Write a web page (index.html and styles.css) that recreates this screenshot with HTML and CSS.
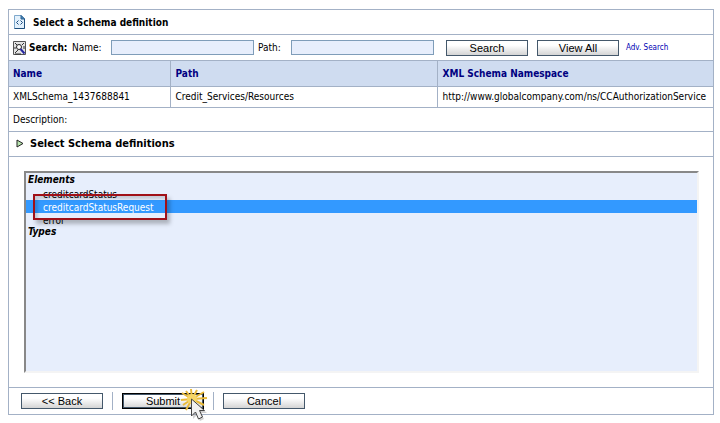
FILE: index.html
```html
<!DOCTYPE html>
<html lang="en">
<head>
    <meta charset="UTF-8">
    <meta name="viewport" content="width=device-width, initial-scale=1.0">
    <title>Select a Schema definition</title>
    <link rel="stylesheet" href="styles.css">
</head>
<body>
    <form class="panel">
        <div class="title-row">
            <svg class="doc-icon" width="11" height="14" viewBox="0 0 11 14">
                <path d="M.5.5h7l3 3v10H.5z" fill="#e3f1fc" stroke="#7fa9cc"/>
                <path d="M10.500 4v9.500H.5" fill="none" stroke="#1f4f7d"/>
                <path d="M7 .5v3.500h3.500z" fill="#4c8fc4" stroke="#2b5f8e"/>
                <path d="M4.500 5.500l-2 2 2 2M6.500 5.500l2 2-2 2" fill="none" stroke="#1c4c80"/>
            </svg>
            <h1>Select a Schema definition</h1>
        </div>

        <div class="search-row">
            <svg class="search-icon" width="13" height="14" viewBox="0 0 13 14">
                <path d="M.5.5h12v13H.5z" fill="#e4e4e4" stroke="#555"/>
                <path d="M2 2l2 2M11 2L9 4M2 12l3-3M2 6v2M11 5v3M2 13h6" stroke="#333"/>
                <circle cx="6" cy="6" r="2.500" fill="#fff" stroke="#222"/>
                <path d="M7.500 8l4 4.500" stroke="#2626a0" stroke-width="2"/>
            </svg>
            <strong>Search:</strong>
            <label for="name">Name:</label>
            <input type="text" id="name">
            <label for="path">Path:</label>
            <input type="text" id="path">
            <button type="button" class="first">Search</button>
            <button type="button">View All</button>
            <a href="#">Adv. Search</a>
        </div>

        <table>
            <thead>
                <tr>
                    <th class="col-name">Name</th>
                    <th class="col-path">Path</th>
                    <th>XML Schema Namespace</th>
                </tr>
            </thead>
            <tbody>
                <tr>
                    <td>XMLSchema_1437688841</td>
                    <td>Credit_Services/Resources</td>
                    <td>http://www.globalcompany.com/ns/CCAuthorizationService</td>
                </tr>
            </tbody>
        </table>

        <div class="description-row">Description:</div>

        <div class="section-row">
            <svg width="8" height="9" viewBox="0 0 8 9">
                <path d="M1 1l6 3.500L1 8z" fill="#b9e6b0" stroke="#222"/>
            </svg>
            <h2><label for="definitions">Select Schema definitions</label></h2>
        </div>

        <div class="list-area">
            <select id="definitions" size="15">
                <optgroup label="Elements">
                    <option>creditcardStatus</option>
                    <option selected>creditcardStatusRequest</option>
                    <option>error</option>
                </optgroup>
                <optgroup label="Types"></optgroup>
            </select>
            <div class="callout"></div>
        </div>

        <div class="button-row">
            <button type="button">&lt;&lt; Back</button>
            <span class="divider"></span>
            <div class="submit-wrap">
                <button type="submit" class="default">Submit</button>
                <svg class="cursor" width="30" height="34" viewBox="0 0 30 34">
                    <path d="M12 11L11 1M12 11l5-9M12 11l12-7M12 11l15-1M12 11l12 6M12 11L6 3M12 11L2 5M12 11L1 12M12 11l-9 6M12 11L6 22M12 11l6 8" fill="none" stroke="#e8b93a" stroke-width="2"/>
                    <circle cx="12" cy="11" r="5" fill="#f6d566"/>
                    <path d="M13 14v17l4-4 3 6 4-2-3-6h6z" fill="#777" opacity=".35"/>
                    <path d="M11.500 11v17l4-4 3 7 4-2-3-6.500h5z" fill="#f1f1f1" stroke="#444"/>
                </svg>
            </div>
            <span class="divider"></span>
            <button type="button">Cancel</button>
        </div>
    </form>
</body>
</html>
```
FILE: styles.css
```css
* {
    box-sizing: border-box;
}
body {
    margin: 0;
    padding: 9px 6px 8px 8px;
    background-color: #fff;
    color: #000;
    font-family: "DejaVu Sans Condensed", "Noto Sans", sans-serif;
    font-size: 10px;
}
.panel {
    border: 1px solid #a3b1c6;
}
.title-row,
.search-row,
.section-row,
.button-row {
    display: flex;
    align-items: center;
}
.title-row,
.search-row,
.description-row,
.section-row {
    border-bottom: 1px solid #a3b1c6;
}
h1,
h2 {
    margin: 0;
    font-size: 10px;
}
.title-row {
    height: 25px;
    padding-left: 5px;
    gap: 8px;
}
.search-row {
    height: 26px;
    padding-left: 4px;
}
.search-row strong {
    width: 43px;
    margin-left: 3px;
}
.search-row label {
    width: 39px;
}
.search-row label + input + label {
    width: 33px;
    margin-left: 4px;
}
input {
    width: 143px;
    height: 15px;
    padding: 0 2px;
    border: 1px solid #7f9db9;
    background-color: #e7eefc;
    font-family: inherit;
    font-size: 10px;
}
button {
    width: 82px;
    height: 16px;
    padding: 0;
    border: 1px solid #44586b;
    background: linear-gradient(#fff 30%, #d4d4d4);
    color: #000;
    font-family: "Liberation Sans", Arial, sans-serif;
    font-size: 11px;
    line-height: 14px;
}
.search-row button {
    margin-left: 9px;
}
.search-row .first {
    margin-left: 12px;
}
.search-row a {
    margin-left: 7px;
    color: #0000b4;
    font-size: 8px;
    text-decoration: none;
}
table {
    width: 100%;
    table-layout: fixed;
    border-collapse: collapse;
}
th,
td {
    padding: 0 0 0 4px;
    border-bottom: 1px solid #a3b1c6;
    text-align: left;
    white-space: nowrap;
}
th + th,
td + td {
    padding-left: 5px;
    border-left: 1px solid #a3b1c6;
}
th {
    height: 25px;
    background-color: #cfdcf0;
    color: #000080;
    font-size: 10px;
}
td {
    height: 21px;
}
.col-name {
    width: 161px;
}
.col-path {
    width: 267px;
}
.description-row {
    padding-left: 4px;
    line-height: 23px;
}
.section-row {
    height: 25px;
    padding-left: 7px;
    gap: 6px;
}
h2 {
    font-size: 11px;
}
.list-area {
    position: relative;
    padding: 14px 14px 14px 15px;
    border-bottom: 1px solid #a3b1c6;
}
select {
    display: block;
    width: 100%;
    height: 202px;
    padding: 1px 0;
    border: 2px solid;
    border-color: #888 #f4f4f4 #f4f4f4 #888;
    border-radius: 0;
    background-color: #e7eefc;
    color: #000;
    font-family: inherit;
    font-size: 10px;
    outline: none;
}
optgroup {
    padding: 0;
    font-size: 10px;
    font-style: italic;
    font-weight: bold;
    line-height: 13px;
}
option {
    min-height: 13px;
    padding: 2px 0 0 17px;
    font-size: 10px;
    font-style: normal;
    font-weight: normal;
    line-height: 11px;
}
option:checked {
    background: #3399ff linear-gradient(#3399ff, #3399ff);
    color: #fff;
}
.callout {
    position: absolute;
    top: 37px;
    left: 24px;
    width: 134px;
    height: 26px;
    border: 2px solid #a01018;
    box-shadow: 3px 4px 4px rgba(0, 0, 0, 0.25), inset 3px 3px 3px rgba(0, 0, 0, 0.15);
}
.button-row {
    height: 26px;
    padding-left: 12px;
    gap: 9px;
}
.divider {
    width: 1px;
    height: 18px;
    background-color: #a3b1c6;
}
.submit-wrap {
    position: relative;
    height: 16px;
}
.default {
    border: 1px solid #000;
    outline: 1px solid #44586b;
    outline-offset: -2px;
}
.cursor {
    position: absolute;
    z-index: 1;
    top: -5px;
    left: 58px;
}
```
